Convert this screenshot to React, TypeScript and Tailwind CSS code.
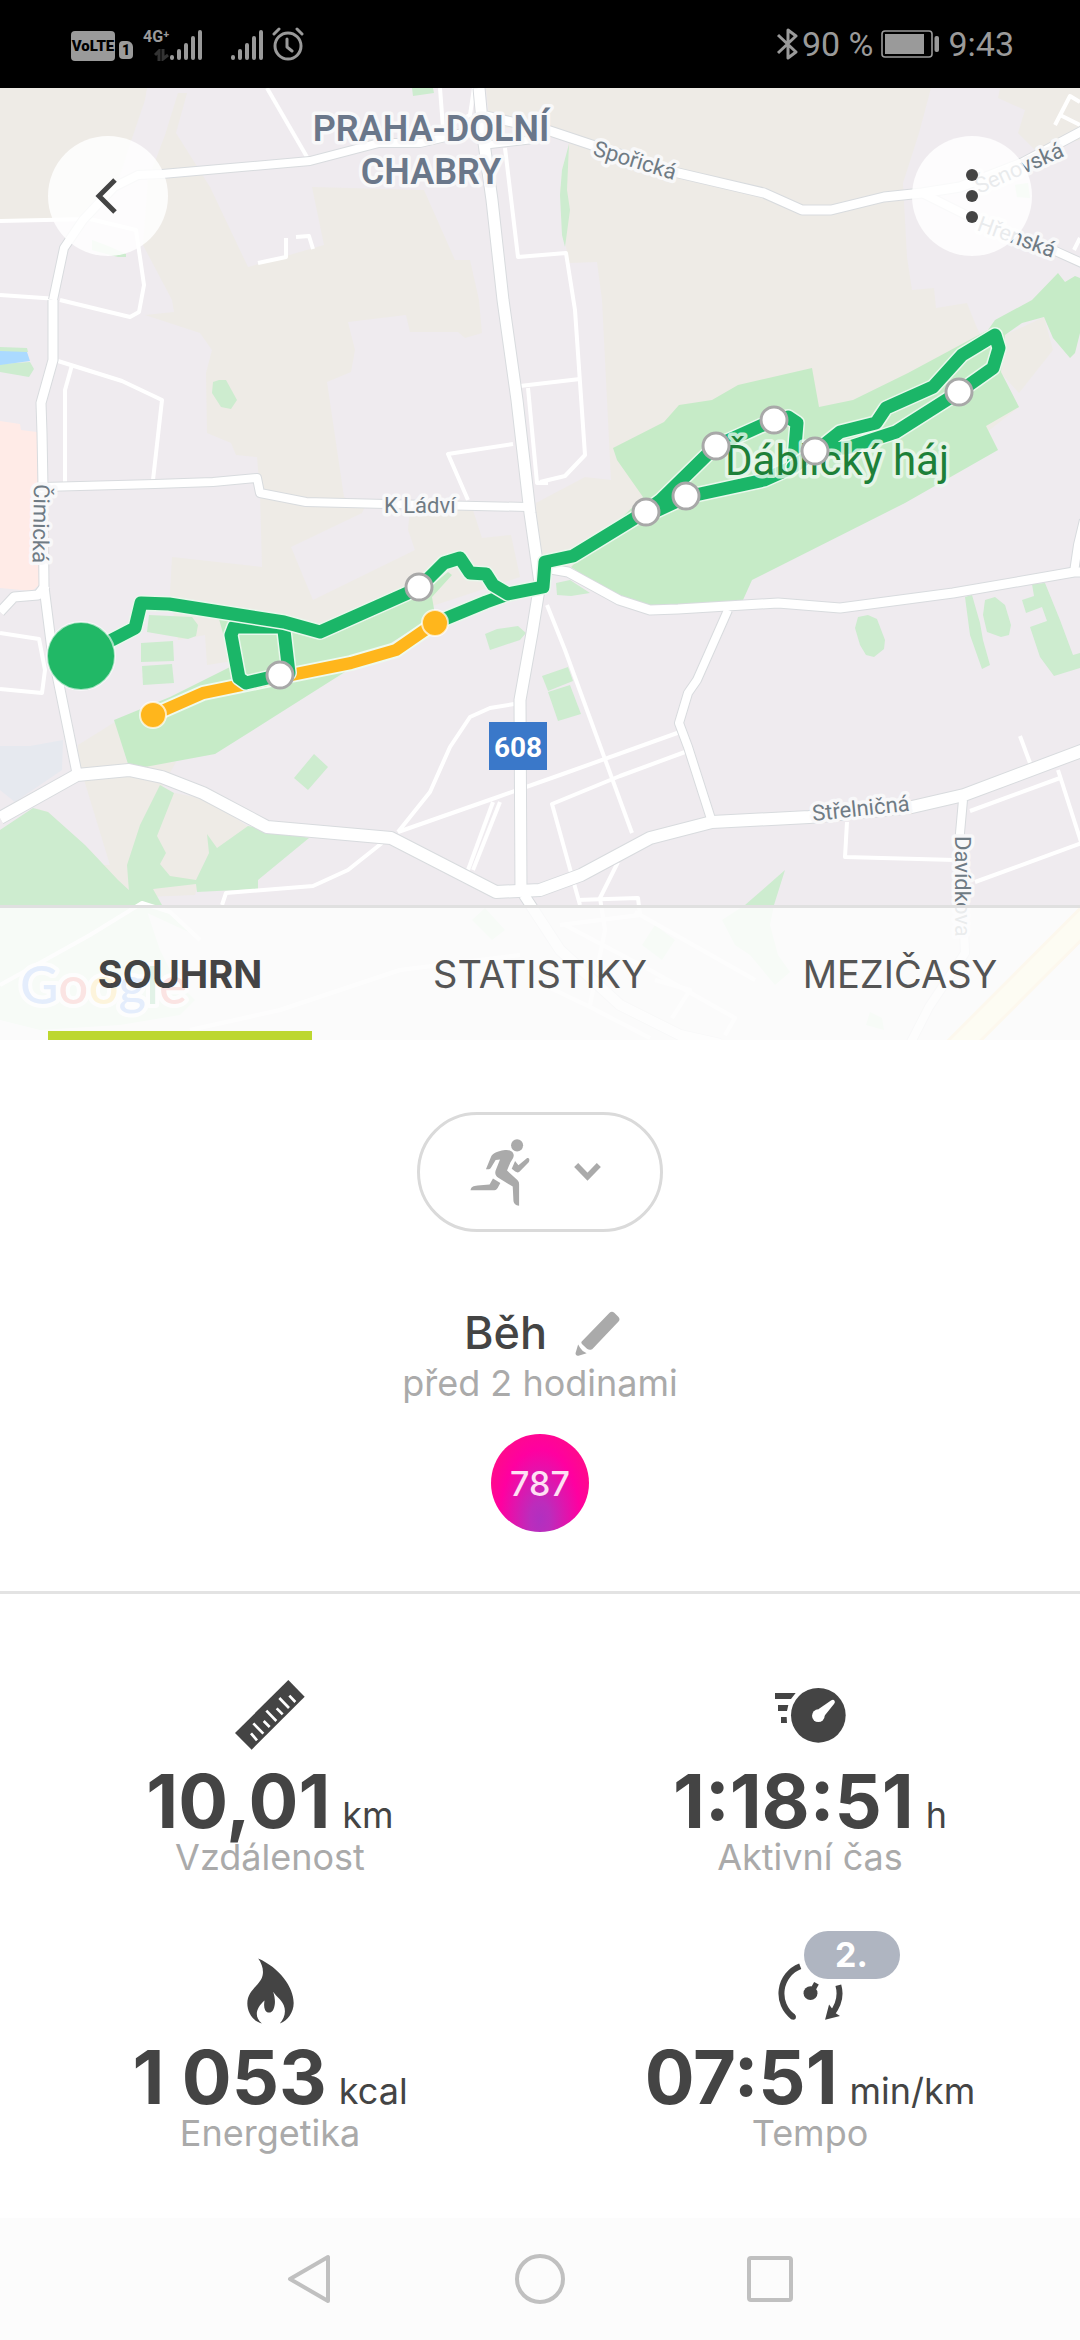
import type { ReactNode } from "react";

const BEIGE = "#eeebe6";
const WOOD = "#c6ebc7";
const GRASS = "#cdeccf";
const INK = "#444444";

const beigeAreas = [
  "0,88 147,88 145,100 128,150 115,190 80,219 0,221",
  "178,93 165,135 148,180 143,245 172,300 174,312 145,315 200,333 212,350 206,373 207,433 231,443 236,455 257,457 260,493 262,567 172,557 170,593 178,640 205,635 207,665 240,660 330,640 520,577 511,535 482,538 472,507 410,507 408,530 415,550 313,600 291,547 362,513 365,507 344,497 327,382 351,372 355,350 348,322 406,315 410,332 458,332 465,338 482,333 479,300 470,260 455,260 424,190 312,187 324,245 248,267 210,187 176,133 187,93",
  "486,88 931,88 919,133 903,183 907,257 912,290 934,288 936,308 967,303 977,328 1019,407 900,500 560,570 538,560 536,503 585,477 611,480 602,300 597,262 569,263 566,247 560,190 569,143 548,128 490,128",
  "1005,335 1044,317 1053,350 1019,393 1000,372",
  "931,88 1000,88 998,98 1025,110 1018,133 1035,150 1080,140 1080,88",
  "78,745 115,722 128,765 176,762 160,790 210,800 250,828 205,860 195,895 120,898 78,760",
  "35,808 48,812 90,850 140,905 118,865 100,865",
];

const woods = [
  "1032,300 995,320 988,330 908,373 853,400 819,407 812,368 738,385 712,400 679,405 664,422 613,448 617,460 643,497 571,567 619,600 650,607 743,600 752,580 905,503 998,450 986,426 1019,407 1001,372 1005,335 1022,323 1044,317 1053,338 1070,358 1075,353 1080,333 1080,278 1075,276 1065,282 1058,273",
  "219,619 232,666 170,697 114,720 128,764 145,767 215,754 280,713 337,677 380,650 435,615 432,597 452,575 448,572 420,595 320,632",
];

const lawns = [
  "412,88 433,88 434,93 413,96",
  "569,144 562,170 560,195 562,235 565,247 570,210 567,190",
  "92,240 108,246 126,254 126,257 118,257 92,250",
  "213,382 219,380 226,380 237,400 231,409 221,407 212,393",
  "0,347 27,348 28,352 0,352",
  "0,364 30,362 34,369 29,377 0,372",
  "149,615 192,617 198,625 196,636 188,639 147,632",
  "141,643 173,641 174,661 141,662",
  "142,666 172,664 174,683 143,685",
  "314,754 328,767 308,790 294,778",
  "485,634 497,629 518,626 526,633 520,640 490,650",
  "160,785 174,793 157,836 166,853 160,864 170,876 196,880 209,853 207,834 217,848 248,826 309,838 258,880 258,889 197,892 196,884 153,889 162,905 195,935 130,905 127,865 140,825",
  "0,830 33,808 48,812 85,845 118,880 145,905 160,950 175,980 195,1000 180,1015 120,1025 40,1030 0,1020",
  "542,676 568,667 573,681 548,691",
  "548,692 570,685 581,714 558,721",
  "858,617 868,615 877,619 885,640 884,649 874,657 866,655 860,645 855,628",
  "965,597 972,595 980,623 983,640 990,665 982,669 970,635",
  "985,600 995,597 1005,605 1011,625 1009,635 1001,637 987,632 983,615",
  "1022,600 1034,596 1032,584 1045,583 1060,620 1073,655 1080,653 1080,668 1054,676 1040,657 1030,627 1047,621 1042,607 1026,613",
  "785,870 774,905 770,925 778,955 790,972 775,985 750,955 735,945 722,920 745,905",
  "1015,185 1028,183 1030,198 1017,197",
  "556,583 570,580 590,593 571,596 557,595",
  "485,908 505,930 492,940 472,920",
  "655,925 675,940 662,960 642,945",
  "870,1012 882,1018 884,1030 866,1025",
];

const minorRoads = [
  "267,88 307,157",
  "440,88 443,128 470,115 474,88",
  "258,263 286,257 286,238",
  "296,237 309,236 313,249",
  "505,148 518,257 566,253 575,310 585,455 565,476 540,482",
  "0,221 90,219 136,230 144,285 139,312 130,317 60,300",
  "0,295 58,299",
  "58,361 122,381 162,400 153,480",
  "72,365 65,390 65,482",
  "520,386 580,379",
  "528,388 537,483 548,483",
  "468,500 448,454 513,444",
  "0,633 39,639 45,670 42,693 0,689",
  "514,704 490,708 470,717 450,747 430,792 398,832",
  "398,832 495,798 560,775 680,732",
  "685,752 620,776 552,804 580,905",
  "493,802 468,870",
  "500,802 473,870",
  "547,605 565,650 632,833",
  "618,862 600,898 605,930 590,1005",
  "577,900 638,898 640,915 560,925",
  "382,843 348,870 313,886 226,893 222,905",
  "0,985 90,935 142,903 170,912 200,940",
  "190,1030 280,1010 400,970 520,955",
  "847,822 845,857 955,860",
  "970,811 1060,778",
  "1020,736 1030,763",
  "1058,770 1082,845",
  "975,882 1082,843",
  "1055,125 1070,96 1080,102",
  "1060,115 1080,125",
  "1074,250 1080,238",
  "565,925 650,970 735,1018 725,1035",
  "635,912 755,980",
  "540,983 590,1007 650,1038",
  "655,980 690,990 672,1018",
];

const streets: { points: string; width: number }[] = [
  { points: "43,487 155,484 213,482 257,478 260,493 306,502 386,504 527,507", width: 8 },
  { points: "728,610 697,680 688,693 679,723 688,747 712,822", width: 8 },
  { points: "0,612 14,597 38,595 46,585", width: 9 },
  { points: "963,800 960,833 965,953 929,1007 908,1048", width: 8 },
  { points: "524,895 560,950 620,1005 680,1035 720,1044", width: 10 },
  { points: "53,300 64,248 83,220 114,187 138,175 162,174 310,161 379,143 420,143 484,128", width: 8 },
  { points: "486,145 547,138", width: 7 },
  { points: "53,300 53,360 41,403 42,433 43,487 44,587 52,650 77,773", width: 9 },
  { points: "486,116 547,130 592,145 674,172 764,193 802,210 831,210 884,197 922,193 960,187 1022,163 1084,130", width: 9 },
  { points: "922,193 970,217 1053,250 1084,264", width: 8 },
  { points: "545,568 568,572 619,600 650,610 678,609 778,603 840,608 953,593 1074,572 1084,572", width: 9 },
  { points: "1074,572 1078,545 1084,520", width: 8 },
  { points: "0,818 77,775 129,770 162,777 203,793 267,827 391,838 496,892 540,890 581,875 650,838 712,822 809,817 912,807 964,795 1084,750", width: 12 },
  { points: "479,88 484,143 492,200 503,300 517,400 530,513 540,583 532,633 520,700 521,893", width: 11 },
];

const trackParts = [
  "284,627 234,627 231,635 239,678 246,683 289,673 283,622",
  "435,623 486,602 508,594",
  "81,656 135,628 141,603 169,604 284,622 320,632 419,588 444,563 460,558 470,573 486,574 493,585 508,594 543,587 545,562 573,556 645,512 661,500 716,446 774,420 788,417 797,423 795,447 793,467 764,480 686,497 645,516",
  "793,467 815,452 840,432 876,423 886,408 933,387 962,355 995,335 999,348 993,368 959,392 896,432 850,447 815,452",
];

const kilometreMarks: [number, number][] = [
  [419, 587], [280, 675], [646, 512], [686, 496], [716, 446], [774, 420], [815, 451], [959, 392],
];

function Halo({ x, y, rotate = 0, children }: { x: number; y: number; rotate?: number; children: ReactNode }) {
  return (
    <text
      transform={`translate(${x} ${y}) rotate(${rotate})`}
      fontSize="22"
      fill="#6f7b84"
      stroke="#f8f8f9"
      strokeWidth="7"
      strokeLinejoin="round"
      paintOrder="stroke"
    >
      {children}
    </text>
  );
}

function RouteMap() {
  return (
    <svg viewBox="0 88 1080 952" preserveAspectRatio="xMidYMid slice" className="block h-full w-full font-['Roboto',sans-serif]" role="img" aria-label="Mapa trasy">
      <rect y="88" width="1080" height="952" fill="#efebef" />
      {beigeAreas.map((p) => <polygon key={p} points={p} fill={BEIGE} />)}
      <polygon points="0,421 20,424 21,430 37,432 39,585 32,591 0,588" fill="#ffebe7" />
      <polygon points="0,746 30,746 63,740 62,770 15,802 0,790" fill="#e6e9ef" />
      {lawns.map((p) => <polygon key={p} points={p} fill={GRASS} />)}
      {woods.map((p) => <polygon key={p} points={p} fill={WOOD} />)}
      <polygon points="0,351 27,352 30,361 0,365" fill="#abdaff" />
      <g fill="none" strokeLinejoin="round">
        {minorRoads.map((p) => <polyline key={p} points={p} stroke="#ffffff" strokeWidth="4" />)}
        {streets.map((s) => <polyline key={s.points} points={s.points} stroke="#d8dbde" strokeWidth={s.width + 2} />)}
        {streets.map((s) => <polyline key={s.points} points={s.points} stroke="#ffffff" strokeWidth={s.width} />)}
        <polyline points="1090,915 1020,985 955,1050" stroke="#f9d88a" strokeWidth="26" />
        <polyline points="1090,915 1020,985 955,1050" stroke="#fff2af" strokeWidth="20" />
      </g>

      <g fontSize="36" fontWeight="600" fill="#6a778a" stroke="#f8f8f9" strokeWidth="7" strokeLinejoin="round" paintOrder="stroke" textAnchor="middle">
        <text x="431" y="141">PRAHA-DOLNÍ</text>
        <text x="431" y="184">CHABRY</text>
      </g>
      <Halo x={592} y={155} rotate={17}>Spořická</Halo>
      <Halo x={979} y={194} rotate={-24}>Šenovská</Halo>
      <Halo x={976} y={230} rotate={20}>Hřenská</Halo>
      <Halo x={34} y={484} rotate={91}>Čimická</Halo>
      <Halo x={384} y={513}>K Ládví</Halo>
      <Halo x={813} y={821} rotate={-6}>Střelničná</Halo>
      <Halo x={955} y={836} rotate={90}>Davídkova</Halo>

      <g fill="none" strokeLinejoin="round" strokeLinecap="round">
        <polyline points="435,623 396,650 351,663 281,677 203,693 153,715" stroke="#eefaf0" strokeWidth="16" />
        <polyline points="435,623 396,650 351,663 281,677 203,693 153,715" stroke="#ffb61c" strokeWidth="12" />
        {trackParts.map((p) => (
          <g key={p}>
            <polyline points={p} stroke="#e9f8ec" strokeWidth="16" />
            <polyline points={p} stroke="#1bb668" strokeWidth="13" />
          </g>
        ))}
      </g>
      <circle cx="81" cy="656" r="34" fill="#21b866" stroke="#ffffff" strokeOpacity="0.6" strokeWidth="2" />
      {[[435, 623], [153, 715]].map(([cx, cy]) => (
        <circle key={cx} cx={cx} cy={cy} r="13" fill="#ffb61c" stroke="#ffffff" strokeOpacity="0.7" strokeWidth="2" />
      ))}
      <text x="725" y="475" fontSize="42" fill="#1d8038" stroke="#eef9f0" strokeOpacity="0.8" strokeWidth="7" strokeLinejoin="round" paintOrder="stroke">Ďáblický háj</text>
      {kilometreMarks.map(([cx, cy]) => (
        <circle key={cx} cx={cx} cy={cy} r="13" fill="#ffffff" stroke="#a8a8a8" strokeWidth="3" />
      ))}
      <rect x="489" y="722" width="58" height="48" fill="#3a78c9" />
      <text x="518" y="757" fontSize="28" fontWeight="700" fill="#ffffff" textAnchor="middle">608</text>
      <text x="20" y="1004" className="font-['Lato',sans-serif]" fontSize="53" fontWeight="500" stroke="#ffffff" strokeWidth="8" strokeLinejoin="round" paintOrder="stroke">
        <tspan fill="#4285f4">G</tspan><tspan fill="#ea4335">o</tspan><tspan fill="#fbbc05">o</tspan><tspan fill="#4285f4">g</tspan><tspan fill="#34a853">l</tspan><tspan fill="#ea4335">e</tspan>
      </text>
    </svg>
  );
}

function SignalBars() {
  return (
    <svg viewBox="0 0 33 32" className="h-8 w-[33px]" stroke="#9a9a9a" strokeWidth="4" strokeLinecap="round" aria-hidden="true">
      <path d="M2 28v1M9 22v7M16 16v13M23 9v20M30 3v26" />
    </svg>
  );
}

function StatusBar() {
  return (
    <header className="flex h-22 items-center justify-between bg-black pr-[66px] pl-[71px] font-['Roboto',sans-serif] text-[#9a9a9a]">
      <div className="flex items-end">
        <span className="flex h-[30px] w-11 items-center justify-center rounded-sm bg-[#9a9a9a] text-[15px] font-black text-black">VoLTE</span>
        <span className="mr-2.5 mb-0.5 ml-1 flex h-[18px] w-[14px] items-center justify-center rounded-sm rounded-tr-md bg-[#9a9a9a] text-sm font-black text-black">1</span>
        <span className="flex h-8 flex-col items-end">
          <span className="text-base leading-4 font-bold">4G⁺</span>
          <svg viewBox="0 0 16 12" className="mt-1 h-3 w-4" fill="none" stroke="#333333" strokeWidth="3" aria-hidden="true">
            <path d="M5 12V2L1 6M9 0v10l5-4" />
          </svg>
        </span>
        <SignalBars />
        <span className="w-7" />
        <SignalBars />
        <svg viewBox="0 0 32 34" className="ml-2 h-[34px] w-8" fill="none" stroke="#9a9a9a" strokeWidth="3" strokeLinecap="round" strokeLinejoin="round" aria-hidden="true">
          <circle cx="16" cy="19" r="13" />
          <path d="M15 12v8l5 4M2 7l5-5M30 7l-5-5" />
        </svg>
      </div>
      <div className="flex items-center">
        <svg viewBox="0 0 22 32" className="h-8 w-[22px]" fill="none" stroke="#9a9a9a" strokeWidth="3" strokeLinejoin="round" aria-hidden="true">
          <path d="M2 7l18 17-8 6V2l8 6L2 25" />
        </svg>
        <span className="ml-1 text-[34px] leading-10">90 %</span>
        <svg viewBox="0 0 59 28" className="mr-2 ml-2 h-7 w-[59px]" aria-hidden="true">
          <rect x="1" y="1" width="50" height="26" rx="3" fill="none" stroke="#9a9a9a" strokeWidth="1.6" />
          <rect x="4" y="4" width="39" height="20" fill="#9a9a9a" />
          <rect x="53.500" y="6" width="4.500" height="16" rx="2" fill="#9a9a9a" />
        </svg>
        <span className="text-[34px] leading-10">9:43</span>
      </div>
    </header>
  );
}

function RunnerIcon() {
  return (
    <svg viewBox="268 146 178 200" className="h-[67px] w-[60px]" fill="#aaaaaa" aria-hidden="true">
      <circle cx="408" cy="165" r="18" />
      <path d="M372 179C386 177 398 184 398 195C398 203 392 208 388 216L378 240L408 268C413 273 414 276 414 282V345C404 345 397 338 397 328L395 288L352 262C344 257 341 250 344 240L357 207L344 209L330 232C327 237 322 237 315 236L330 200C334 190 345 183 372 179Z" />
      <path d="M402 212L412 224L438 203C446 200 446 212 442 216L415 244C408 248 404 245 392 235Z" />
      <path d="M336 264L358 277L350 292C346 298 342 299 336 299H269C271 289 277 286 290 285L326 282C330 276 332 270 336 264Z" />
    </svg>
  );
}

function RulerIcon() {
  return (
    <svg viewBox="408 60 210 210" className="size-[70px]" aria-hidden="true">
      <path d="M568 60l49 50l-159 159l-50-50z" fill={INK} />
      <path d="M456 220l18 21M463 190l30 31M494 183l18 18M502 152l30 31M533 145l18 18M541 114l29 30M571 107l18 19" stroke="#ffffff" strokeWidth="8" />
    </svg>
  );
}

function StopwatchIcon() {
  return (
    <svg viewBox="462 87 213 165" className="h-[55px] w-[71px]" fill={INK} aria-hidden="true">
      <circle cx="592" cy="169" r="82" />
      <path d="M462 102h62l-14 18h-48zM471 138h31l-4 18h-27zM480 174h17l1 18h-18z" />
      <path d="M592 151L631 124Q637 120 641 126Q643 130 639 135L610 171Z" fill="#ffffff" />
      <circle cx="592" cy="170" r="19" fill="#ffffff" />
    </svg>
  );
}

function FlameIcon() {
  return (
    <svg viewBox="437 113 142 198" className="h-[66px] w-[47px]" fill={INK} aria-hidden="true">
      <path d="M471 114C535 142 578 200 578 248C578 276 560 302 536 310C550 296 556 275 548 255C541 237 526 230 516 214C522 232 524 252 517 267C512 280 497 280 492 270C488 262 488 252 490 241C466 262 456 288 482 310C455 303 438 278 438 250C438 216 464 202 479 178C490 160 486 135 471 114Z" />
    </svg>
  );
}

function PaceIcon() {
  return (
    <span className="relative block">
      <svg viewBox="474 128 196 172" className="h-[57px] w-[65px]" fill="none" stroke={INK} strokeWidth="18" aria-hidden="true">
        <path d="M541 138A88 88 0 0 0 520 291" />
        <circle cx="520" cy="291" r="8" fill={INK} stroke="none" />
        <path d="M656 195Q669 240 636 282" />
        <path d="M628 253L616 299L661 288L648 280Z" fill={INK} stroke="none" />
        <circle cx="572" cy="219" r="21" fill={INK} stroke="none" />
        <path d="M577 212L590 189" strokeWidth="16" />
      </svg>
      <span className="absolute bottom-[41px] left-[26px] flex h-12 w-24 items-center justify-center rounded-full bg-[#afb5c1] text-[34px] leading-none font-bold text-white">2.</span>
    </span>
  );
}

function Stat({ icon, value, unit, label }: { icon: ReactNode; value: string; unit: string; label: string }) {
  return (
    <div className="flex flex-col items-center">
      <div className="flex h-18 items-center justify-center">{icon}</div>
      <p className="mt-3.5 flex items-baseline gap-3 whitespace-nowrap text-[#444444]">
        <span className="text-[74px] leading-[72px] font-bold">{value}</span>
        <span className="text-[36px] leading-10">{unit}</span>
      </p>
      <p className="text-[36px] leading-10 text-[#aaaaaa]">{label}</p>
    </div>
  );
}

const tabs = ["SOUHRN", "STATISTIKY", "MEZIČASY"];

export default function App() {
  return (
    <div className="flex min-h-screen flex-col bg-white font-['Inter',sans-serif]">
      <StatusBar />
      <section className="relative h-[952px] overflow-hidden">
        <RouteMap />
        <div className="absolute inset-x-12 top-12 flex justify-between">
          <button aria-label="Zpět" className="flex size-30 items-center justify-center rounded-full bg-white/85 pr-1">
            <svg viewBox="0 0 22 36" className="h-9 w-[22px]" fill="none" stroke={INK} strokeWidth="5" aria-hidden="true">
              <path d="M20 2L4 18l16 16" />
            </svg>
          </button>
          <button aria-label="Další možnosti" className="flex size-30 items-center justify-center rounded-full bg-white/85">
            <svg viewBox="0 0 12 54" className="h-[54px] w-3" fill={INK} aria-hidden="true">
              <circle cx="6" cy="6" r="6" />
              <circle cx="6" cy="27" r="6" />
              <circle cx="6" cy="48" r="6" />
            </svg>
          </button>
        </div>
        <div role="tablist" className="absolute inset-x-0 bottom-0 grid h-[135px] grid-cols-3 border-t-3 border-[#e0e0e0] bg-[#fdfdfd]/87">
          {tabs.map((tab, i) => (
            <button key={tab} role="tab" aria-selected={i === 0} className="flex flex-col items-stretch px-12 text-[38px] leading-none whitespace-nowrap text-[#555555] aria-selected:font-bold aria-selected:text-[#444444]">
              <span className="flex flex-1 items-center justify-center self-center pt-2">{tab}</span>
              <span className={i === 0 ? "h-[9px] bg-[#bdd730]" : "h-[9px]"} />
            </button>
          ))}
        </div>
      </section>

      <main className="flex-1">
        <section className="flex flex-col items-center border-b-3 border-[#e3e3e3] pt-18 pb-[59px]">
          <button aria-label="Druh sportu: běh" className="flex h-30 w-[246px] items-center justify-center gap-11 rounded-full border-3 border-[#dadada] pr-2.5">
            <RunnerIcon />
            <svg viewBox="582 218 80 54" className="h-[18px] w-[27px]" fill="none" stroke="#aaaaaa" strokeWidth="17" aria-hidden="true">
              <path d="M588 224l34 35l34-35" />
            </svg>
          </button>
          <div className="mt-[76px] flex items-center gap-7 pl-1">
            <h1 className="text-[45px] leading-[50px] font-medium text-[#444444]">Běh</h1>
            <button aria-label="Upravit název">
              <svg viewBox="582 659 136 137" className="size-[45px]" fill="#aaaaaa" aria-hidden="true">
                <path d="M602 752L686 665C691 660 696 660 701 664L714 677C718 682 718 686 714 691L636 773C630 779 624 778 618 774L605 762C600 757 600 754 602 752Z" />
                <path d="M591 761L597 771Q604 783 617 788L592 795Q583 797 583 788Z" />
              </svg>
            </button>
          </div>
          <p className="text-[36px] leading-[50px] text-[#aaaaaa]">před 2 hodinami</p>
          <div className="mt-[26px] flex size-[98px] items-center justify-center rounded-full bg-[radial-gradient(ellipse_at_50%_88%,#b030c0_0%,#bc2cbc_15%,#ff00a0_58%,#ff1478_100%)] text-[34px] font-medium text-[#ffe0f4]">787</div>
        </section>

        <section className="grid grid-cols-2 gap-y-[78px] pt-[85px] pb-16">
          <Stat icon={<RulerIcon />} value="10,01" unit="km" label="Vzdálenost" />
          <Stat icon={<StopwatchIcon />} value="1:18:51" unit="h" label="Aktivní čas" />
          <Stat icon={<FlameIcon />} value="1 053" unit="kcal" label="Energetika" />
          <Stat icon={<PaceIcon />} value="07:51" unit="min/km" label="Tempo" />
        </section>
      </main>

      <nav aria-label="Systémová navigace" className="flex h-[122px] items-center justify-center gap-[180px] bg-[#fcfcfc]">
        <button aria-label="Zpět v systému">
          <svg viewBox="0 0 50 50" className="size-[50px]" fill="none" stroke="#c0c0c0" strokeWidth="4" strokeLinejoin="round" aria-hidden="true">
            <path d="M43 3v44L5 25z" />
          </svg>
        </button>
        <button aria-label="Domů">
          <svg viewBox="0 0 50 50" className="size-[50px]" fill="none" stroke="#c0c0c0" strokeWidth="4" aria-hidden="true">
            <circle cx="25" cy="25" r="23" />
          </svg>
        </button>
        <button aria-label="Poslední aplikace">
          <svg viewBox="0 0 50 50" className="size-[50px]" fill="none" stroke="#c0c0c0" strokeWidth="4" aria-hidden="true">
            <rect x="4" y="4" width="42" height="42" rx="2" />
          </svg>
        </button>
      </nav>
    </div>
  );
}
